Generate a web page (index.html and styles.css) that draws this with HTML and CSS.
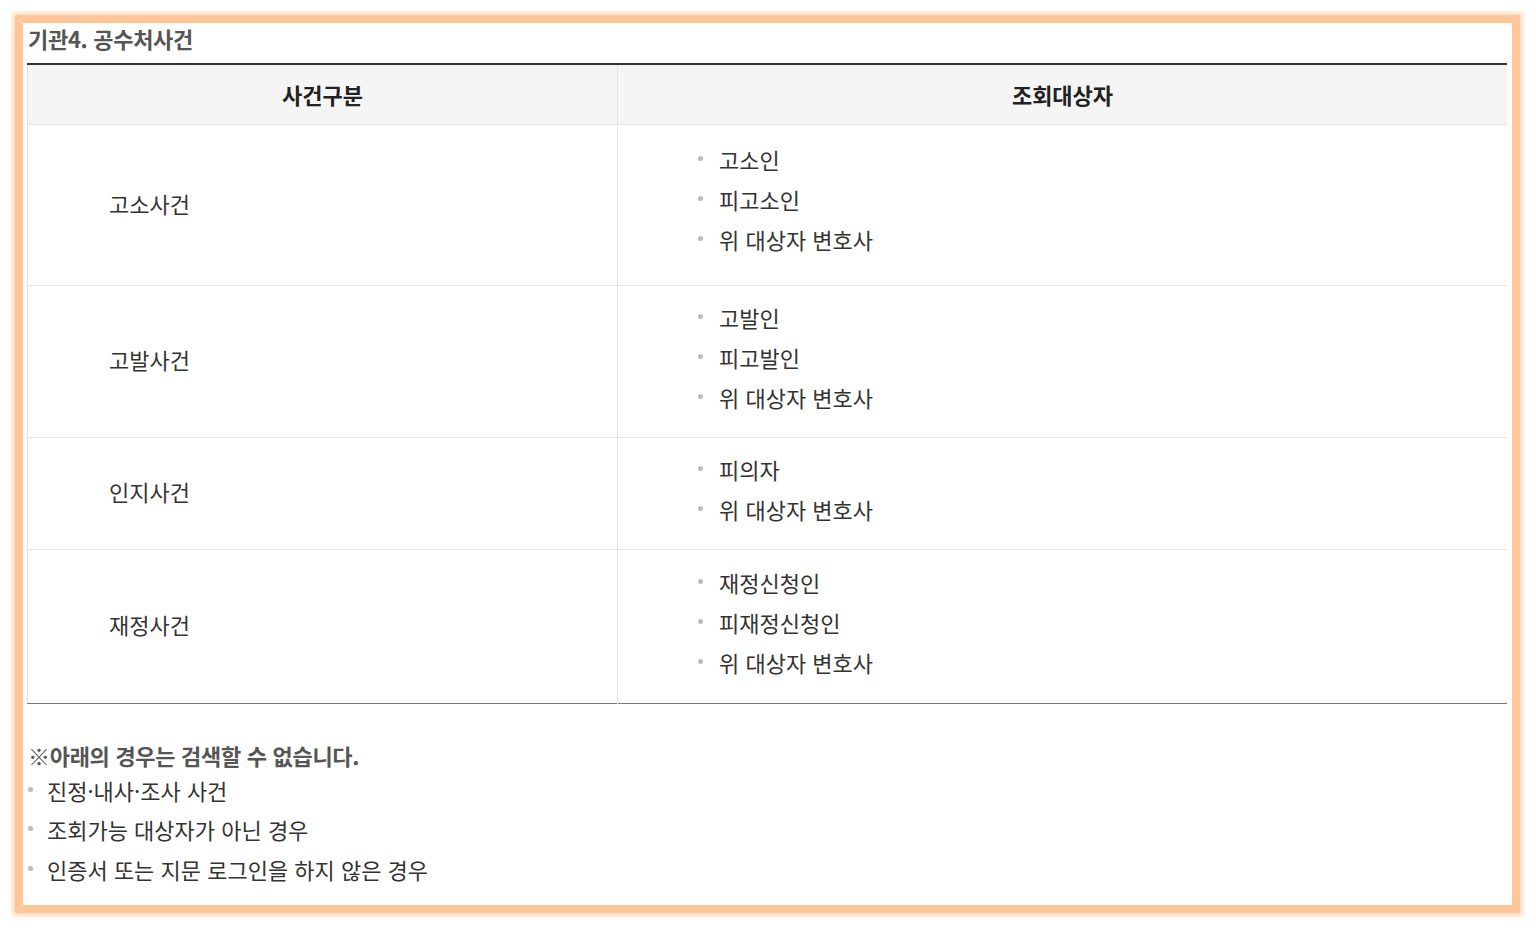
FILE: index.html
```html
<!DOCTYPE html>
<html lang="ko">
<head>
<meta charset="utf-8">
<title>기관4. 공수처사건</title>
<link rel="stylesheet" href="styles.css">
</head>
<body>
<div class="frame">
  <h2 class="title">기관4. 공수처사건</h2>
  <table class="tbl">
    <thead>
      <tr><th class="c1">사건구분</th><th class="c2">조회대상자</th></tr>
    </thead>
    <tbody>
      <tr class="r1">
        <td class="kind">고소사건</td>
        <td class="who"><ul class="dots"><li>고소인</li><li>피고소인</li><li>위 대상자 변호사</li></ul></td>
      </tr>
      <tr>
        <td class="kind">고발사건</td>
        <td class="who"><ul class="dots"><li>고발인</li><li>피고발인</li><li>위 대상자 변호사</li></ul></td>
      </tr>
      <tr>
        <td class="kind">인지사건</td>
        <td class="who"><ul class="dots"><li>피의자</li><li>위 대상자 변호사</li></ul></td>
      </tr>
      <tr class="r4">
        <td class="kind">재정사건</td>
        <td class="who"><ul class="dots"><li>재정신청인</li><li>피재정신청인</li><li>위 대상자 변호사</li></ul></td>
      </tr>
    </tbody>
  </table>
  <p class="note-title">※아래의 경우는 검색할 수 없습니다.</p>
  <ul class="dots notes">
    <li>진정·내사·조사 사건</li>
    <li>조회가능 대상자가 아닌 경우</li>
    <li>인증서 또는 지문 로그인을 하지 않은 경우</li>
  </ul>
</div>
</body>
</html>
```

FILE: styles.css
```css
* { box-sizing: border-box; }
html, body { margin: 0; background: #fff; }
body {
  padding: 15px;
  font-family: "Noto Sans CJK KR", "Noto Sans", sans-serif;
  color: #333;
}
.frame {
  width: 1505px;
  height: 898px;
  border: 8px solid #ffc699;
  box-shadow: 0 0 6px 2px #ffd2ad;
  background: #fff;
}
.title {
  margin: 0 0 10px 5px;
  font-size: 22px;
  line-height: 30px;
  font-weight: 700;
  color: #555;
  letter-spacing: -0.3px;
}
.tbl {
  margin-left: 4px;
  width: 1480px;
  border-collapse: collapse;
  border-top: 2px solid #333;
  border-bottom: 1px solid #777;
  border-left: 1px solid #e2e4ea;
}
.tbl th {
  height: 60px;
  padding-bottom: 2px;
  background: #f5f5f5;
  font-size: 22px;
  font-weight: 700;
  color: #222;
  text-align: center;
  border-bottom: 1px solid #e2e4ea;
}
.c1 { width: 590px; border-right: 1px solid #e2e4ea; }
.tbl td { border-bottom: 1px solid #e2e4ea; vertical-align: middle; }
.tbl tbody tr:last-child td { border-bottom: none; }
.kind {
  border-right: 1px solid #e2e4ea;
  padding: 0 0 4px 81px;
  font-size: 22px;
  color: #333;
}
.who { padding: 11px 0 20px 80px; }
.r1 .who { padding: 14px 0 26px 80px; }
.r4 .who { padding: 12px 0 21px 80px; }
.dots {
  list-style: none;
  margin: 0;
  padding: 0;
}
.dots li {
  position: relative;
  padding-left: 21px;
  font-size: 22px;
  line-height: 40px;
  color: #333;
}
.dots li::before {
  content: "";
  position: absolute;
  left: 0;
  top: 17px;
  width: 5px;
  height: 5px;
  border-radius: 50%;
  background: #bbb;
}
.note-title {
  margin: 35px 0 0 5px;
  font-size: 22px;
  line-height: 32px;
  font-weight: 700;
  color: #555;
  letter-spacing: -0.3px;
}
.notes { margin-left: 5px; }
.notes li { line-height: 39.5px; padding-left: 19px; }
.notes li::before { top: 16px; }
```
